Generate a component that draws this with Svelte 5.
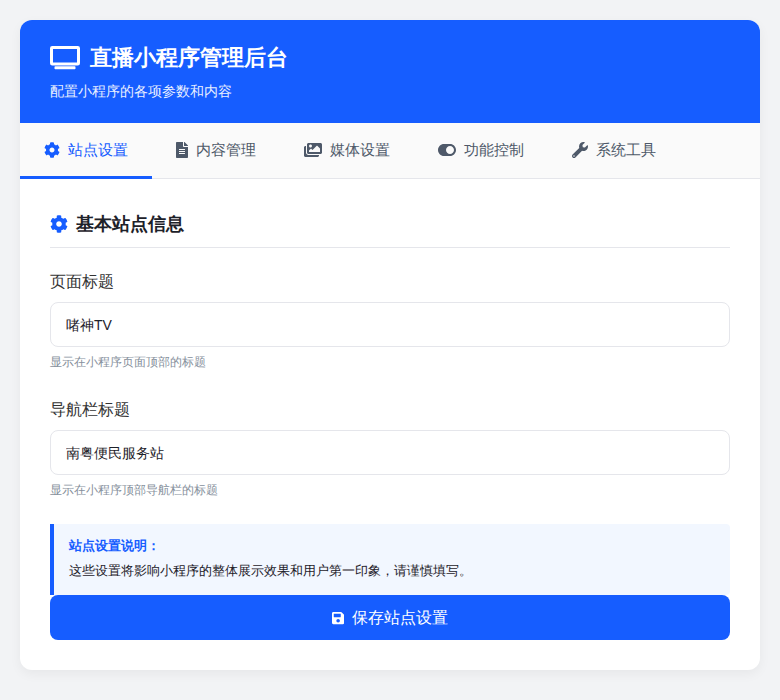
<script>
  const paths = {
    cog: 'M487.4 315.7l-42.6-24.6c4.3-23.2 4.3-47 0-70.2l42.6-24.6c4.9-2.8 7.1-8.6 5.5-14-11.1-35.6-30-67.8-54.7-94.6-3.8-4.1-10-5.1-14.8-2.3L380.8 110c-17.9-15.4-38.5-27.3-60.8-35.1V25.8c0-5.6-3.9-10.5-9.4-11.7-36.7-8.2-74.3-7.8-109.2 0-5.5 1.2-9.4 6.1-9.4 11.7V75c-22.2 7.9-42.8 19.8-60.8 35.1L88.7 85.5c-4.9-2.8-11-1.9-14.8 2.3-24.7 26.7-43.6 58.9-54.7 94.6-1.7 5.4.6 11.2 5.5 14L67.3 221c-4.3 23.2-4.3 47 0 70.2l-42.6 24.6c-4.9 2.8-7.1 8.6-5.5 14 11.1 35.6 30 67.8 54.7 94.6 3.8 4.1 10 5.1 14.8 2.3l42.6-24.6c17.9 15.4 38.5 27.3 60.8 35.1v49.2c0 5.6 3.9 10.5 9.4 11.7 36.7 8.2 74.3 7.8 109.2 0 5.5-1.2 9.4-6.1 9.4-11.7v-49.2c22.2-7.9 42.8-19.8 60.8-35.1l42.6 24.6c4.9 2.8 11 1.9 14.8-2.3 24.7-26.7 43.6-58.9 54.7-94.6 1.5-5.5-.7-11.3-5.6-14.1zM256 336c-44.1 0-80-35.9-80-80s35.9-80 80-80 80 35.9 80 80-35.9 80-80 80z',
    file: 'M224 136V0H24C10.7 0 0 10.7 0 24v464c0 13.3 10.7 24 24 24h336c13.3 0 24-10.7 24-24V160H248c-13.2 0-24-10.8-24-24zm64 236c0 6.6-5.4 12-12 12H108c-6.6 0-12-5.4-12-12v-8c0-6.6 5.4-12 12-12h168c6.6 0 12 5.4 12 12v8zm0-64c0 6.6-5.4 12-12 12H108c-6.6 0-12-5.4-12-12v-8c0-6.6 5.4-12 12-12h168c6.6 0 12 5.4 12 12v8zm0-72v8c0 6.6-5.4 12-12 12H108c-6.6 0-12-5.4-12-12v-8c0-6.6 5.4-12 12-12h168c6.6 0 12 5.4 12 12zm96-114.1v6.1H256V0h6.1c6.4 0 12.5 2.5 17 7l97.9 98c4.5 4.5 7 10.6 7 16.9z',
    images: 'M480 416v16c0 26.51-21.49 48-48 48H48c-26.51 0-48-21.49-48-48V176c0-26.51 21.49-48 48-48h16v208c0 44.112 35.888 80 80 80h336zm96-80V80c0-26.51-21.49-48-48-48H144c-26.51 0-48 21.49-48 48v256c0 26.51 21.49 48 48 48h384c26.51 0 48-21.49 48-48zM256 128c0 26.51-21.49 48-48 48s-48-21.49-48-48 21.49-48 48-48 48 21.49 48 48zm-96 144l55.515-55.515c4.686-4.686 12.284-4.686 16.971 0L272 256l135.515-135.515c4.686-4.686 12.284-4.686 16.971 0L512 208v112H160v-48z',
    toggle: 'M384 64H192C86 64 0 150 0 256s86 192 192 192h192c106 0 192-86 192-192S490 64 384 64zm0 320c-70.8 0-128-57.3-128-128 0-70.8 57.3-128 128-128 70.8 0 128 57.3 128 128 0 70.8-57.3 128-128 128z',
    wrench: 'M507.73 109.1c-2.24-9.03-13.54-12.09-20.12-5.51l-74.36 74.36-67.88-11.31-11.31-67.88 74.36-74.36c6.62-6.62 3.43-17.9-5.66-20.16-47.38-11.74-99.55.91-136.58 37.93-39.64 39.64-50.55 97.1-34.05 147.2L18.74 402.76c-24.99 24.99-24.99 65.51 0 90.5 24.99 24.99 65.51 24.99 90.5 0l213.21-213.21c50.12 16.71 107.47 5.68 147.37-34.22 37.07-37.07 49.7-89.32 37.91-136.73zM64 472c-13.25 0-24-10.75-24-24 0-13.26 10.75-24 24-24s24 10.74 24 24c0 13.25-10.75 24-24 24z',
    save: 'M433.941 129.941l-83.882-83.882A48 48 0 0 0 316.118 32H48C21.49 32 0 53.49 0 80v352c0 26.51 21.49 48 48 48h352c26.51 0 48-21.49 48-48V163.882a48 48 0 0 0-14.059-33.941zM224 416c-35.346 0-64-28.654-64-64 0-35.346 28.654-64 64-64s64 28.654 64 64c0 35.346-28.654 64-64 64zm96-304.52V212c0 6.627-5.373 12-12 12H76c-6.627 0-12-5.373-12-12V108c0-6.627 5.373-12 12-12h228.52c3.183 0 6.235 1.264 8.485 3.515l3.48 3.48A11.996 11.996 0 0 1 320 111.48z',
    tv: 'M592 0H48A48 48 0 0 0 0 48v320a48 48 0 0 0 48 48h544a48 48 0 0 0 48-48V48a48 48 0 0 0-48-48zm-16 352H64V64h512zM528 432H112a16 16 0 0 0-16 16v32a16 16 0 0 0 16 16h416a16 16 0 0 0 16-16v-32a16 16 0 0 0-16-16z'
  };

  const tabs = [
    { label: '站点设置', icon: 'cog', w: 512 },
    { label: '内容管理', icon: 'file', w: 384 },
    { label: '媒体设置', icon: 'images', w: 576 },
    { label: '功能控制', icon: 'toggle', w: 576 },
    { label: '系统工具', icon: 'wrench', w: 512 }
  ];

  let active = $state(0);
  let pageTitle = $state('啫神TV');
  let navTitle = $state('南粤便民服务站');
</script>

<div class="card">
  <header class="head">
    <h1>
      <svg height="24" viewBox="0 0 640 512" fill="currentColor"><path d={paths.tv} /></svg>
      直播小程序管理后台
    </h1>
    <p>配置小程序的各项参数和内容</p>
  </header>

  <nav class="tabs">
    {#each tabs as tab, i}
      <button class="tab" class:active={active === i} onclick={() => (active = i)}>
        <svg height="16" viewBox="0 0 {tab.w} 512" fill="currentColor"><path d={paths[tab.icon]} /></svg>
        <span>{tab.label}</span>
      </button>
    {/each}
  </nav>

  <main class="body">
    <h2>
      <svg height="18" viewBox="0 0 512 512" fill="#165dff"><path d={paths.cog} /></svg>
      基本站点信息
    </h2>

    <div class="field">
      <label for="page-title">页面标题</label>
      <input id="page-title" bind:value={pageTitle} />
      <small>显示在小程序页面顶部的标题</small>
    </div>

    <div class="field">
      <label for="nav-title">导航栏标题</label>
      <input id="nav-title" bind:value={navTitle} />
      <small>显示在小程序顶部导航栏的标题</small>
    </div>

    <div class="note">
      <strong>站点设置说明：</strong>
      <p>这些设置将影响小程序的整体展示效果和用户第一印象，请谨慎填写。</p>
    </div>

    <button class="save">
      <svg height="14" viewBox="0 0 448 512" fill="currentColor"><path d={paths.save} /></svg>
      保存站点设置
    </button>
  </main>
</div>

<style>
  :global(body) {
    background: #f2f3f5;
    font-family: "Liberation Sans", sans-serif;
  }

  .card {
    width: 740px;
    margin: 20px;
    background: #fff;
    border-radius: 12px;
    overflow: hidden;
    box-shadow: 0 4px 12px rgba(0, 0, 0, 0.05);
  }

  .head {
    height: 103px;
    box-sizing: border-box;
    padding: 20px 30px;
    background: #165dff;
    color: #fff;
  }

  .head h1 {
    display: flex;
    align-items: center;
    gap: 10px;
    margin: 0 0 4px;
    font-size: 22px;
    line-height: 36px;
    font-weight: 700;
  }

  .head p {
    margin: 0;
    font-size: 14px;
    line-height: 22px;
    opacity: 0.9;
  }

  .tabs {
    display: flex;
    height: 56px;
    box-sizing: border-box;
    background: #fafafa;
    border-bottom: 1px solid #e5e6eb;
  }

  .tab {
    display: flex;
    align-items: center;
    gap: 8px;
    height: 56px;
    padding: 0 24px;
    border: 0;
    border-bottom: 3px solid transparent;
    background: none;
    color: #4e5969;
    font: inherit;
    font-size: 15px;
  }

  .tab span {
    padding-top: 2px;
  }

  .tab.active {
    color: #165dff;
    border-bottom-color: #165dff;
  }

  .body {
    padding: 30px;
  }

  h2 {
    display: flex;
    align-items: center;
    gap: 8px;
    margin: 0 0 22px;
    padding-bottom: 8px;
    border-bottom: 1px solid #e5e6eb;
    font-size: 18px;
    line-height: 30px;
    font-weight: 700;
    color: #1d2129;
  }

  .field {
    margin-bottom: 24px;
  }

  .field + .field {
    padding-top: 2px;
  }

  label {
    display: block;
    margin-bottom: 8px;
    font-size: 16px;
    line-height: 24px;
    color: #333;
  }

  input {
    display: block;
    width: 100%;
    height: 45px;
    box-sizing: border-box;
    padding: 2px 15px 0;
    border: 1px solid #e5e6eb;
    border-radius: 8px;
    background: #fff;
    color: #1d2129;
    font: inherit;
    font-size: 14px;
  }

  small {
    display: block;
    margin-top: 6px;
    font-size: 12px;
    line-height: 19px;
    color: #86909c;
  }

  .note {
    padding: 11px 15px;
    height: 71px;
    box-sizing: border-box;
    border-left: 4px solid #165dff;
    border-radius: 0 4px 4px 0;
    background: #f2f7ff;
    font-size: 13px;
    line-height: 21px;
    color: #1d2129;
  }

  .note strong {
    display: block;
    margin-bottom: 4px;
    color: #165dff;
  }

  .note p {
    margin: 0;
  }

  .save {
    display: flex;
    align-items: center;
    justify-content: center;
    gap: 8px;
    width: 100%;
    height: 45px;
    padding-top: 2px;
    border: 0;
    border-radius: 8px;
    background: #165dff;
    color: #fff;
    font: inherit;
    font-size: 16px;
  }
</style>
